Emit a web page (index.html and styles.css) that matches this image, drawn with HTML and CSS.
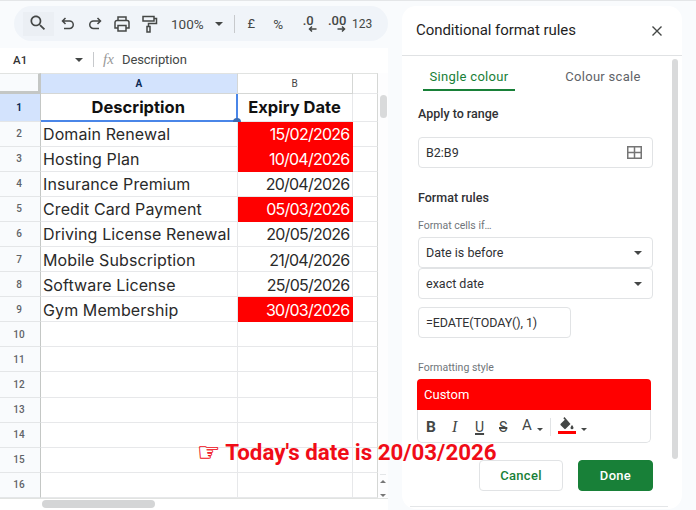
FILE: index.html
```html
<!DOCTYPE html>
<html lang="en">
<head>
<meta charset="utf-8">
<title>Conditional format rules</title>
<link rel="stylesheet" href="styles.css">
</head>
<body>
<div class="app">
  <main class="sheet">
    <div class="toolbar">
      <span class="tool tool-search"><svg width="20" height="20" viewBox="0 0 24 24"><path d="M15.5 14h-.79l-.28-.27C15.41 12.59 16 11.11 16 9.5 16 5.91 13.09 3 9.5 3S3 5.91 3 9.5 5.91 16 9.5 16c1.61 0 3.09-.59 4.23-1.57l.27.28v.79l5 4.99L20.49 19l-4.99-5zm-6 0C7.01 14 5 11.99 5 9.5S7.01 5 9.5 5 14 7.01 14 9.5 11.99 14 9.5 14z"/></svg></span>
      <span class="tool"><svg class="line" width="18" height="18" viewBox="0 0 18 18"><path d="M6.5 3 3.5 6l3 3M4 6h6.5a3.5 3.5 0 0 1 0 7.500H5"/></svg></span>
      <span class="tool"><svg class="line" width="18" height="18" viewBox="0 0 18 18"><path d="M11.500 3l3 3-3 3M14 6H7.500a3.500 3.500 0 0 0 0 7.500H13"/></svg></span>
      <span class="tool"><svg class="line" width="20" height="20" viewBox="0 0 20 20"><path d="M6 6V3h8v3M6 14H3V8.500A2 2 0 0 1 5 6.500h10a2 2 0 0 1 2 2V14h-3M6 11.500h8V17H6z"/></svg></span>
      <span class="tool"><svg class="line" width="18" height="20" viewBox="0 0 18 20"><path d="M3 2.500h11v4.500H3zM14 4.500h2.500v5H8.500v3M7 12.500h3v5.500H7z"/></svg></span>
      <span class="zoom">100%</span><i class="caret caret-zoom"></i>
      <span class="vsep"></span>
      <span class="tool tool-text tool-pound">£</span>
      <span class="tool tool-text tool-percent">%</span>
      <span class="tool tool-dec"><span>.0</span><svg class="line" width="9" height="6" viewBox="0 0 9 6"><path d="M8.500 3H1.500M4 .500 1.500 3 4 5.500"/></svg></span>
      <span class="tool tool-dec tool-dec2"><span>.00</span><svg class="line" width="9" height="6" viewBox="0 0 9 6"><path d="M.500 3h7M5 .500 7.500 3 5 5.500"/></svg></span>
      <span class="tool tool-text tool-123">123</span>
    </div>

    <div class="formula">
      <span class="namebox">A1</span><i class="caret caret-name"></i>
      <span class="vsep vsep-formula"></span>
      <span class="fx">fx</span>
      <span class="formula-value">Description</span>
    </div>

    <div class="grid">
      <div class="cells">
        <div class="row row-head">
          <div class="corner"></div>
          <div class="colhead active">A</div>
          <div class="colhead">B</div>
          <div class="filler"></div>
        </div>
        <div class="row row-title">
          <div class="rowhead active">1</div>
          <div class="cell title selected">Description</div>
          <div class="cell title">Expiry Date</div>
          <div class="filler"></div>
          <i class="handle"></i>
        </div>
        <div class="row"><div class="rowhead">2</div><div class="cell">Domain Renewal</div><div class="cell date due">15/02/2026</div><div class="filler"></div></div>
        <div class="row"><div class="rowhead">3</div><div class="cell">Hosting Plan</div><div class="cell date due">10/04/2026</div><div class="filler"></div></div>
        <div class="row"><div class="rowhead">4</div><div class="cell">Insurance Premium</div><div class="cell date">20/04/2026</div><div class="filler"></div></div>
        <div class="row"><div class="rowhead">5</div><div class="cell">Credit Card Payment</div><div class="cell date due">05/03/2026</div><div class="filler"></div></div>
        <div class="row"><div class="rowhead">6</div><div class="cell">Driving License Renewal</div><div class="cell date">20/05/2026</div><div class="filler"></div></div>
        <div class="row"><div class="rowhead">7</div><div class="cell">Mobile Subscription</div><div class="cell date">21/04/2026</div><div class="filler"></div></div>
        <div class="row"><div class="rowhead">8</div><div class="cell">Software License</div><div class="cell date">25/05/2026</div><div class="filler"></div></div>
        <div class="row"><div class="rowhead">9</div><div class="cell">Gym Membership</div><div class="cell date due">30/03/2026</div><div class="filler"></div></div>
        <div class="row"><div class="rowhead">10</div><div class="cell"></div><div class="cell"></div><div class="filler"></div></div>
        <div class="row"><div class="rowhead">11</div><div class="cell"></div><div class="cell"></div><div class="filler"></div></div>
        <div class="row"><div class="rowhead">12</div><div class="cell"></div><div class="cell"></div><div class="filler"></div></div>
        <div class="row"><div class="rowhead">13</div><div class="cell"></div><div class="cell"></div><div class="filler"></div></div>
        <div class="row"><div class="rowhead">14</div><div class="cell"></div><div class="cell"></div><div class="filler"></div></div>
        <div class="row"><div class="rowhead">15</div><div class="cell"></div><div class="cell"></div><div class="filler"></div></div>
        <div class="row"><div class="rowhead">16</div><div class="cell"></div><div class="cell"></div><div class="filler"></div></div>
      </div>
      <div class="vscroll">
        <span class="vthumb"></span>
        <span class="arrows"><i class="arrow-up"></i><i class="arrow-down"></i></span>
      </div>
    </div>
    <div class="hscroll"><span class="hthumb"></span></div>
  </main>

  <aside class="panel">
    <header class="panel-head">
      <h1>Conditional format rules</h1>
      <svg class="close" width="12" height="12" viewBox="0 0 12 12"><path d="M1.500 1.500l9 9M10.500 1.500l-9 9"/></svg>
    </header>
    <div class="panel-body">
      <div class="panel-main">
        <div class="tabs">
          <span class="tab on">Single colour</span>
          <span class="tab">Colour scale</span>
        </div>
        <h2 class="label-range">Apply to range</h2>
        <div class="field field-range">
          <span>B2:B9</span>
          <svg class="gridicon" width="15" height="13" viewBox="0 0 15 13"><path d="M.750.750h13.500v11.500H.750zM7.500.750v11.500M.750 6.500h13.500"/></svg>
        </div>
        <h2 class="label-rules">Format rules</h2>
        <p class="hint hint-if">Format cells if…</p>
        <div class="field field-select"><span>Date is before</span><i class="caret"></i></div>
        <div class="field field-select field-second"><span>exact date</span><i class="caret"></i></div>
        <div class="field field-formula"><span>=EDATE(TODAY(), 1)</span></div>
        <p class="hint hint-style">Formatting style</p>
        <div class="style-box">
          <div class="preview">Custom</div>
          <div class="style-tools">
            <b class="st st-b">B</b>
            <i class="st st-i">I</i>
            <u class="st st-u">U</u>
            <s class="st st-s">S</s>
            <span class="st st-a">A</span><i class="caret caret-small"></i>
            <span class="vsep vsep-style"></span>
            <span class="fill">
              <svg width="16" height="14" viewBox="0 0 16 14"><path d="M5.500 1 4.300 2.200l1.500 1.500L1.700 7.800a1 1 0 0 0 0 1.400l3.600 3.600a1 1 0 0 0 1.400 0l4.800-4.800zM13 9s-1.500 1.800-1.500 2.800a1.500 1.500 0 0 0 3 0C14.500 10.800 13 9 13 9z"/></svg>
              <i class="fill-bar"></i>
            </span>
            <i class="caret caret-small"></i>
          </div>
        </div>
        <div class="actions">
          <button class="btn btn-cancel" type="button">Cancel</button>
          <button class="btn btn-done" type="button">Done</button>
        </div>
      </div>
      <div class="panel-scroll"></div>
    </div>
    <div class="panel-foot"></div>
  </aside>
</div>
<div class="note"><span class="hand">☞</span> Today's date is 20/03/2026</div>
</body>
</html>
```
FILE: styles.css
```css
* { box-sizing: border-box; }
html, body { margin: 0; height: 100%; }
body {
  position: relative;
  width: 696px;
  height: 510px;
  overflow: hidden;
  background: #f9fbfd;
  font-family: Roboto, "Liberation Sans", sans-serif;
  color: #3c4043;
}
.app {
  display: flex;
  gap: 14px;
  height: 510px;
  padding-top: 1px;
  border-top: 1px solid #e4e6e8;
}
.sheet { width: 388px; flex: none; display: flex; flex-direction: column; }
.toolbar {
  display: flex;
  align-items: center;
  height: 35px;
  margin: 4px 0 0 14px;
  padding-left: 9px;
  background: #f0f4f9;
  border-radius: 18px;
}
.tool {
  flex: none;
  width: 27px;
  height: 24px;
  display: flex;
  align-items: center;
  justify-content: center;
}
.tool svg { fill: #444746; }
.tool-search { width: 31px; background: #ebeff4; }
.tool-search svg { margin: -2px 0 0 -2px; }
svg.line { fill: none; stroke: #444746; stroke-width: 1.500; }
.zoom { margin-left: 9px; font-size: 13.500px; color: #444746; }
.caret {
  display: inline-block;
  width: 0;
  height: 0;
  border: 4px solid transparent;
  border-top: 4px solid #444746;
  border-bottom: 0;
}
.caret-zoom { margin-left: 11px; }
.vsep { flex: none; width: 1px; height: 18px; background: #c7c9cc; }
.toolbar .vsep { margin: 0 3px 0 11px; }
.tool-text { font-size: 12px; color: #444746; }
.tool-pound { font-size: 13px; }
.tool-percent { font-size: 13.500px; }
.tool-123 { margin-left: -1px; }
.tool-dec { flex-direction: column; font-size: 13px; font-weight: 500; line-height: 10px; color: #444746; padding-left: 3px; width: 30px; }
.tool-dec svg { margin-left: 8px; }
.tool-dec2 { width: 28px; }
.formula {
  display: flex;
  align-items: center;
  height: 25px;
  margin-top: 7px;
  padding: 0 0 2px 13px;
  background: #fff;
  font-size: 13px;
  color: #444746;
}
.namebox { width: 62px; font-size: 11.500px; font-weight: 500; color: #333; }
.vsep-formula { margin: 0 9px 0 10px; height: 15px; }
.fx { width: 19px; font-family: "Liberation Serif", serif; font-style: italic; font-size: 15px; color: #999; }
.formula-value { letter-spacing: -.1px; }
.grid { display: flex; }
.cells { width: 378px; flex: none; }
.row {
  position: relative;
  display: grid;
  grid-template-columns: 41px 196.500px 115px 25.500px;
  height: 25.100px;
}
.row-head { height: 21px; }
.row-title { height: 27.500px; }
.corner { background: #f9fbfd; border-right: 3px solid #c4c7c5; border-bottom: 3px solid #c4c7c5; border-top: 1px solid #e1e3e1; }
.colhead {
  display: flex;
  align-items: center;
  justify-content: center;
  font-size: 10px;
  color: #444;
  background: #fff;
  border-top: 1px solid #e1e3e1;
  border-right: 1px solid #d5d7d5;
  border-bottom: 1px solid #d5d7d5;
}
.colhead.active { background: #d3e3fd; font-weight: 700; color: #0b2a55; }
.rowhead {
  display: flex;
  align-items: center;
  justify-content: center;
  padding-right: 2px;
  font-size: 10px;
  font-weight: 500;
  color: #5f6368;
  background: #f9fbfd;
  border-right: 1px solid #c4c7c5;
  border-bottom: 1px solid #e4e6e8;
}
.rowhead.active { background: #d3e3fd; font-weight: 700; color: #0b2a55; }
.cell {
  display: flex;
  align-items: center;
  padding: 1px 2px 0;
  font-family: Inter, "Liberation Sans", sans-serif;
  font-size: 16px;
  letter-spacing: .1px;
  color: #2a2a2a;
  background: #fff;
  border-right: 1px solid #e7e8ea;
  border-bottom: 1px solid #e7e8ea;
  white-space: nowrap;
}
.filler { background: #fff; border-bottom: 1px solid #e7e8ea; border-right: 1px solid #d5d7d5; }
.row-head .filler { border-top: 1px solid #e1e3e1; }
.cell.title { justify-content: center; padding-top: 0; font-weight: 700; font-size: 16.500px; letter-spacing: 0; color: #111; }
.selected { border-right: 2px solid #4a86e8; border-bottom: 2px solid #4a86e8; }
.cell.date { justify-content: flex-end; padding-right: 2px; letter-spacing: -.75px; }
.due { background: #f00; color: #fff; border-color: #f00; }
.handle {
  position: absolute;
  left: 233px;
  bottom: -4px;
  width: 8px;
  height: 8px;
  border-radius: 50%;
  background: #3a6db5;
}
.vscroll {
  width: 10px;
  flex: none;
  display: flex;
  flex-direction: column;
  justify-content: space-between;
  align-items: center;
  background: #fdfdfe;
  padding: 22px 0 0;
}
.vthumb { width: 7px; height: 23px; border-radius: 4px; background: #d9dadb; }
.arrows { display: flex; flex-direction: column; align-items: center; gap: 11px; height: 24px; padding-top: 5px; border-top: 1px solid #e4e6e8; }
.arrow-up, .arrow-down { width: 0; height: 0; border: 3px solid transparent; }
.arrow-up { border-bottom-color: #777; border-top: 0; }
.arrow-down { border-top-color: #777; border-bottom: 0; }
.hscroll { height: 12px; padding: 1px 0 0 42px; background: #fff; border-top: 1px solid #e1e3e1; }
.hthumb { display: block; width: 113px; height: 8px; border-radius: 4px; background: #d4d5d6; }

.panel {
  width: 280px;
  height: 503px;
  margin-top: 4px;
  flex: none;
  display: flex;
  flex-direction: column;
  background: #fff;
  border-radius: 14px;
}
.panel-head {
  display: flex;
  align-items: center;
  justify-content: space-between;
  flex: none;
  height: 50px;
  padding: 0 19px 0 14px;
  border-bottom: 1px solid #e0e2e4;
}
.panel-head h1 { margin: 0 0 1px; font-size: 15px; font-weight: 400; letter-spacing: -.05px; color: #1f1f1f; }
.close { fill: none; stroke: #444746; stroke-width: 1.400; }
.panel-body { display: flex; flex: 1; min-height: 0; }
.panel-main { width: 270px; padding: 0 0 0 16px; flex: none; }
.panel-scroll { width: 6px; height: 400px; margin: 3px 0 0 0; background: #d9dadb; border-radius: 3px; }
.panel-foot { flex: none; height: 1px; margin: 0 14px 2px 8px; background: #e4e6e8; }
.tabs { display: flex; height: 35px; margin-left: 5px; }
.tab {
  width: 92px;
  padding-top: 13px;
  text-align: center;
  font-size: 13px;
  letter-spacing: .3px;
  color: #5f6368;
}
.tab + .tab { margin-left: 43px; width: 90px; }
.tab.on { color: #188038; border-bottom: 2px solid #188038; font-weight: 400; }
h2 { margin: 0; font-size: 12.500px; font-weight: 500; color: #303134; }
.label-range { margin-top: 15px; line-height: 16px; }
.field {
  display: flex;
  align-items: center;
  justify-content: space-between;
  width: 235px;
  height: 31px;
  padding: 0 10px 0 7px;
  background: #fff;
  border: 1px solid #e1e3e5;
  border-radius: 4px;
  font-size: 12.500px;
  color: #303134;
}
.field-range { margin-top: 15px; }
.gridicon { fill: none; stroke: #757575; stroke-width: 1.500; }
.label-rules { margin-top: 22px; line-height: 16px; }
.hint { margin: 0; font-size: 10.500px; color: #70757a; line-height: 14px; }
.hint-if { margin-top: 13px; }
.field-select { margin-top: 4px; letter-spacing: 0; padding-right: 10px; }
.field-second { margin-top: 0; }
.field-formula { width: 153px; margin-top: 8px; letter-spacing: -.1px; }
.hint-style { margin-top: 23px; }
.style-box {
  width: 234px;
  height: 64px;
  margin: 4px 0 0 -1px;
  border: 1px solid #e1e3e5;
  border-top: 0;
  border-radius: 5px;
}
.preview {
  height: 31px;
  margin: 0 -1px;
  padding: 0 0 0 7px;
  display: flex;
  align-items: center;
  background: #f00;
  color: #fff;
  font-size: 13px;
  border-radius: 4px 4px 0 0;
}
.style-tools { display: flex; align-items: center; height: 33px; padding: 1px 0 0 8px; }
.st { width: 24px; font-size: 14px; color: #444746; line-height: 16px; text-decoration-thickness: 1.500px; }
.st-b { font-weight: 700; font-size: 15.500px; }
.st-i { font-family: "Liberation Serif", serif; font-size: 16px; padding-left: 2px; }
.st-u { font-size: 14px; padding-left: 1px; }
.st-s { font-size: 14px; padding-left: 1px; }
.st-a { width: 10px; margin: -4px 0 0 0; font-size: 15px; }
.caret-small { margin: 4px 0 0 5px; border-width: 3.500px; border-top-width: 3.500px; border-bottom: 0; }
.vsep-style { height: 18px; margin: 0 6px 0 7px; background: #e1e3e5; }
.fill { display: flex; flex-direction: column; align-items: center; width: 19px; gap: 1px; margin-top: -5px; }
.fill svg { fill: #444746; }
.fill-bar { width: 18px; height: 3px; background: #f00; display: block; }
.actions { display: flex; justify-content: flex-end; gap: 15px; width: 235px; margin-top: 17px; }
.btn {
  height: 31px;
  border-radius: 4px;
  font-family: Roboto, "Liberation Sans", sans-serif;
  font-size: 13px;
  font-weight: 500;
  letter-spacing: .3px;
}
.btn-cancel { width: 84px; background: #fff; color: #188038; border: 1px solid #e1e3e5; }
.btn-done { width: 75px; background: #188038; color: #fff; border: 1px solid #188038; }
.note {
  position: absolute;
  left: 197px;
  top: 438px;
  display: flex;
  align-items: center;
  gap: 5px;
  font-size: 22.300px;
  line-height: 28px;
  font-weight: 700;
  color: #f00c17;
  white-space: nowrap;
}
.hand { font-family: "DejaVu Sans", sans-serif; font-weight: 400; font-size: 26px; -webkit-text-stroke: .3px #f00c17; }
```
